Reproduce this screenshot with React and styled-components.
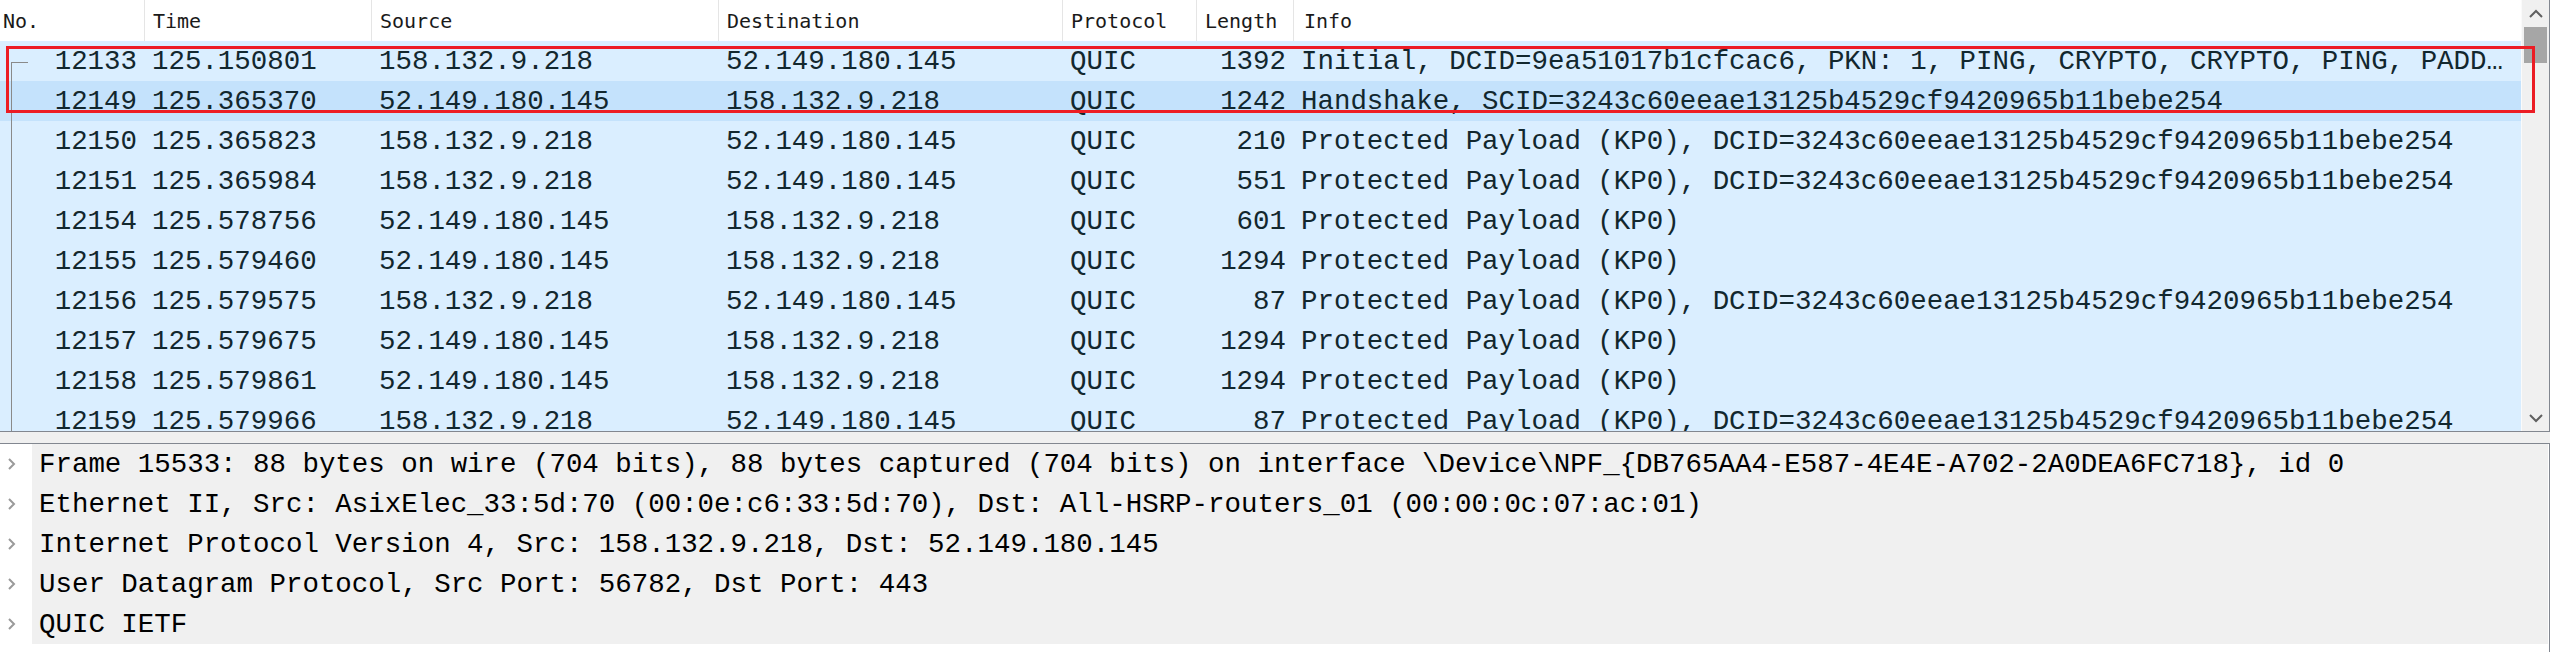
import React from "react"
import styled, { createGlobalStyle } from "styled-components"

const GlobalStyle = createGlobalStyle`
  html, body {
    margin: 0;
    padding: 0;
    background: #fff;
  }
  body {
    font-family: "Liberation Mono", "DejaVu Sans Mono", monospace;
  }
`

const COLUMNS = "145px 227px 347px 344px 134px 97px 1fr"

const Screen = styled.div`
  width: 2550px;
  height: 652px;
  display: flex;
  flex-direction: column;
  overflow: hidden;
  background: #fff;
`

const PacketList = styled.div`
  position: relative;
  height: 432px;
  flex: none;
  display: flex;
  border-right: 1px solid #828790;
  border-bottom: 1px solid #828790;
  box-sizing: border-box;
`

const ListMain = styled.div`
  flex: 1;
  overflow: hidden;
  display: flex;
  flex-direction: column;
`

const HeaderRow = styled.div`
  display: grid;
  grid-template-columns: ${COLUMNS};
  height: 41px;
  flex: none;
  background: #fff;
`

const HeaderCell = styled.div`
  display: flex;
  align-items: center;
  padding: 0 0 0 ${p => p.$pad || 8}px;
  font-family: "DejaVu Sans Mono", monospace;
  font-size: 20px;
  color: #1a1a1a;
  border-right: 1px solid #e5e5e5;
  &:last-child {
    border-right: none;
  }
`

const Row = styled.div`
  display: grid;
  grid-template-columns: ${COLUMNS};
  height: 40px;
  flex: none;
  background: ${p => (p.$selected ? "#c4e2fc" : "#daeeff")};
  color: #12272e;
  font-size: 27.45px;
`

const Cell = styled.div`
  position: relative;
  display: flex;
  align-items: center;
  justify-content: ${p => (p.$right ? "flex-end" : "flex-start")};
  padding: ${p => (p.$right ? "0 8px 0 0" : "0 0 0 7px")};
  white-space: pre;
  overflow: hidden;
`

const TreeMark = styled.span`
  position: absolute;
  left: 11px;
  top: ${p => (p.$start ? "21px" : "0")};
  bottom: 0;
  width: 1px;
  background: #8a8a8a;
  &::after {
    content: "";
    display: ${p => (p.$start ? "block" : "none")};
    position: absolute;
    left: 0;
    top: 0;
    width: 17px;
    height: 1px;
    background: #8a8a8a;
  }
`

const Scrollbar = styled.div`
  width: 27px;
  flex: none;
  background: #f0f0f0;
  border-left: 1px solid #fafafa;
  display: flex;
  flex-direction: column;
  align-items: center;
`

const ScrollButton = styled.div`
  height: 27px;
  width: 100%;
  display: flex;
  align-items: center;
  justify-content: center;
  flex: none;
`

const Thumb = styled.div`
  width: 23px;
  height: 36px;
  background: #a6a6a6;
  flex: none;
`

const Track = styled.div`
  flex: 1;
`

const Annotation = styled.div`
  position: absolute;
  left: 6px;
  top: 46px;
  width: 2529px;
  height: 67px;
  border: 3px solid #ec1c24;
  box-sizing: border-box;
  pointer-events: none;
`

const Splitter = styled.div`
  height: 11px;
  flex: none;
  background: #f0f0f0;
  border-bottom: 1px solid #828790;
`

const DetailPane = styled.div`
  flex: 1;
  border-right: 1px solid #828790;
  background: #fff;
  display: flex;
  flex-direction: column;
`

const DetailLine = styled.div`
  display: grid;
  grid-template-columns: 32px 1fr;
  height: 40px;
  margin-right: 1px;
`

const Expander = styled.div`
  display: flex;
  align-items: center;
  padding-left: 8px;
`

const DetailText = styled.div`
  background: #f0f0f0;
  display: flex;
  align-items: center;
  padding-left: 7px;
  font-size: 27.45px;
  color: #000;
  white-space: pre;
  overflow: hidden;
`

const Chevron = ({ dir }) => {
  const points = {
    up: "1,8 7,2 13,8",
    down: "1,2 7,8 13,2",
    right: "1,1 6,6 1,11",
  }[dir]
  const isRight = dir === "right"
  return (
    <svg
      width={isRight ? 8 : 14}
      height={isRight ? 12 : 10}
      viewBox={isRight ? "0 0 8 12" : "0 0 14 10"}
    >
      <polyline
        points={points}
        fill="none"
        stroke={isRight ? "#9a9a9a" : "#606060"}
        strokeWidth="2"
      />
    </svg>
  )
}

const DCID = "DCID=3243c60eeae13125b4529cf9420965b11bebe254"
const PP = "Protected Payload (KP0)"

const packets = [
  ["12133", "125.150801", "158.132.9.218", "52.149.180.145", "QUIC", "1392", "Initial, DCID=9ea51017b1cfcac6, PKN: 1, PING, CRYPTO, CRYPTO, PING, PADD…"],
  ["12149", "125.365370", "52.149.180.145", "158.132.9.218", "QUIC", "1242", "Handshake, SCID=3243c60eeae13125b4529cf9420965b11bebe254"],
  ["12150", "125.365823", "158.132.9.218", "52.149.180.145", "QUIC", "210", `${PP}, ${DCID}`],
  ["12151", "125.365984", "158.132.9.218", "52.149.180.145", "QUIC", "551", `${PP}, ${DCID}`],
  ["12154", "125.578756", "52.149.180.145", "158.132.9.218", "QUIC", "601", PP],
  ["12155", "125.579460", "52.149.180.145", "158.132.9.218", "QUIC", "1294", PP],
  ["12156", "125.579575", "158.132.9.218", "52.149.180.145", "QUIC", "87", `${PP}, ${DCID}`],
  ["12157", "125.579675", "52.149.180.145", "158.132.9.218", "QUIC", "1294", PP],
  ["12158", "125.579861", "52.149.180.145", "158.132.9.218", "QUIC", "1294", PP],
  ["12159", "125.579966", "158.132.9.218", "52.149.180.145", "QUIC", "87", `${PP}, ${DCID}`],
]

const details = [
  "Frame 15533: 88 bytes on wire (704 bits), 88 bytes captured (704 bits) on interface \\Device\\NPF_{DB765AA4-E587-4E4E-A702-2A0DEA6FC718}, id 0",
  "Ethernet II, Src: AsixElec_33:5d:70 (00:0e:c6:33:5d:70), Dst: All-HSRP-routers_01 (00:00:0c:07:ac:01)",
  "Internet Protocol Version 4, Src: 158.132.9.218, Dst: 52.149.180.145",
  "User Datagram Protocol, Src Port: 56782, Dst Port: 443",
  "QUIC IETF",
]

const headers = ["No.", "Time", "Source", "Destination", "Protocol", "Length", "Info"]

const App = () => (
  <Screen>
    <GlobalStyle />
    <PacketList>
      <ListMain>
        <HeaderRow>
          {headers.map((h, i) => (
            <HeaderCell key={h} $pad={i === 0 ? 3 : i === 6 ? 10 : 8}>
              {h}
            </HeaderCell>
          ))}
        </HeaderRow>
        {packets.map((p, i) => (
          <Row key={p[0]} $selected={i === 1}>
            <Cell $right>
              <TreeMark $start={i === 0} />
              {p[0]}
            </Cell>
            <Cell>{p[1]}</Cell>
            <Cell>{p[2]}</Cell>
            <Cell>{p[3]}</Cell>
            <Cell>{p[4]}</Cell>
            <Cell $right>{p[5]}</Cell>
            <Cell>{p[6]}</Cell>
          </Row>
        ))}
      </ListMain>
      <Scrollbar>
        <ScrollButton>
          <Chevron dir="up" />
        </ScrollButton>
        <Thumb />
        <Track />
        <ScrollButton>
          <Chevron dir="down" />
        </ScrollButton>
      </Scrollbar>
      <Annotation />
    </PacketList>
    <Splitter />
    <DetailPane>
      {details.map(d => (
        <DetailLine key={d}>
          <Expander>
            <Chevron dir="right" />
          </Expander>
          <DetailText>{d}</DetailText>
        </DetailLine>
      ))}
    </DetailPane>
  </Screen>
)

export default App
